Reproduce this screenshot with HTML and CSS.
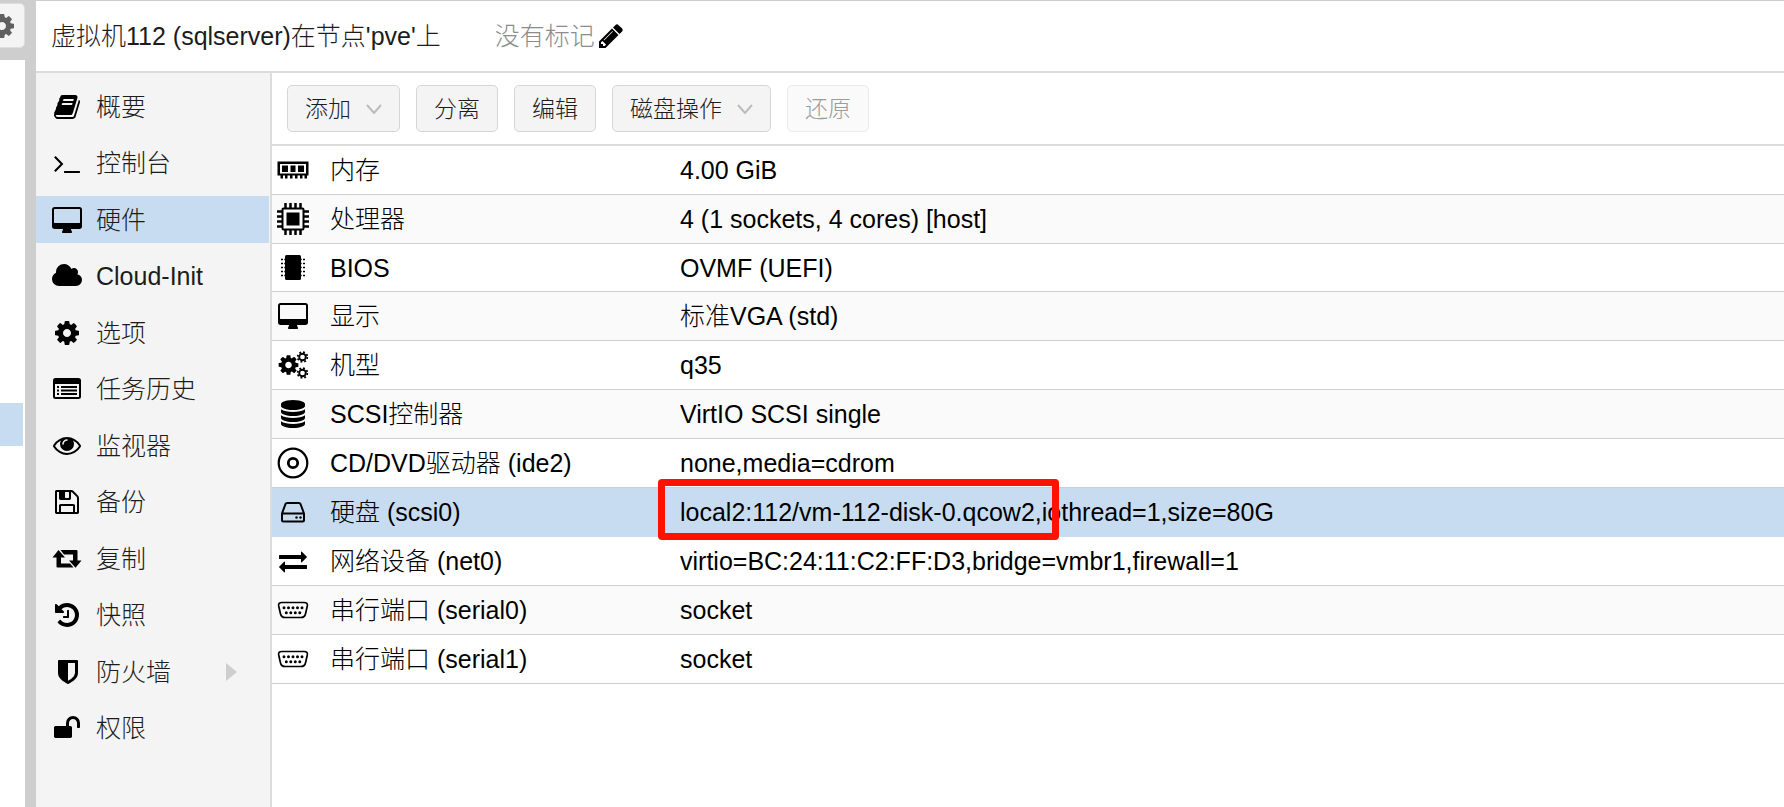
FILE: index.html
```html
<!DOCTYPE html>
<html lang="zh-CN">
<head>
<meta charset="utf-8">
<title>虚拟机112 (sqlserver)</title>
<link rel="stylesheet" href="styles.css">
</head>
<body>
<svg class="sprite" aria-hidden="true">
  <symbol id="cog" viewBox="0 0 1792 1792"><path d="M1152 896q0-106-75-181t-181-75-181 75-75 181 75 181 181 75 181-75 75-181zm512-109v222q0 12-8 23t-20 13l-185 28q-19 54-39 91 35 50 107 138 10 12 10 25t-9 23q-27 37-99 108t-94 71q-12 0-26-9l-138-108q-44 23-91 38-16 136-29 186-7 28-36 28h-222q-14 0-24.5-8.5t-11.5-21.5l-28-184q-49-16-90-37l-141 107q-10 9-25 9-14 0-25-11-126-114-165-168-7-10-7-23 0-12 8-23 15-21 51-66.5t54-70.5q-27-50-41-99l-183-27q-13-2-21-12.5t-8-23.5v-222q0-12 8-23t19-13l186-28q14-46 39-92-40-57-107-138-10-12-10-24 0-10 9-23 26-36 98.5-107.5t94.5-71.5q13 0 26 10l138 107q44-23 91-38 16-136 29-186 7-28 36-28h222q14 0 24.5 8.5t11.5 21.5l28 184q49 16 90 37l142-107q9-9 24-9 13 0 25 10 129 119 165 170 7 8 7 22 0 12-8 23-15 21-51 66.5t-54 70.5q26 50 41 98l183 28q13 2 21 12.5t8 23.5z"/></symbol>
  <symbol id="cog-small" viewBox="0 0 12 12"><g fill="none" stroke="currentColor"><circle cx="6" cy="6" r="3.300" stroke-width="1.900"/><circle cx="6" cy="6" r="4.900" stroke-width="1.800" stroke-dasharray="1.900 1.948"/></g></symbol>
  <symbol id="desktop" viewBox="0 -64 2048 1792"><path d="M1856 992v-832q0-13-9.5-22.5t-22.5-9.5h-1600q-13 0-22.5 9.5t-9.5 22.5v832q0 13 9.5 22.5t22.5 9.5h1600q13 0 22.5-9.5t9.5-22.5zm128-832v1088q0 66-47 113t-113 47h-544q0 37 16 77.5t32 71 16 43.5q0 26-19 45t-45 19h-512q-26 0-45-19t-19-45q0-14 16-44t32-70 16-78h-544q-66 0-113-47t-47-113v-1088q0-66 47-113t113-47h1600q66 0 113 47t47 113z"/></symbol>
  <symbol id="serial" viewBox="0 0 32 18">
    <path d="M5 1.5H27Q31 1.5 30.300 5L28.600 12.500Q27.800 16.500 24 16.500H8Q4.200 16.500 3.400 12.500L1.700 5Q1 1.500 5 1.500Z" fill="none" stroke="currentColor" stroke-width="1.700"/>
    <g fill="none" stroke="currentColor" stroke-width="3" stroke-linecap="round"><path d="M7 6.800H25.100" stroke-dasharray="0 4.500"/><path d="M9.300 11.800H23" stroke-dasharray="0 4.500"/></g>
  </symbol>
</svg>

<aside class="tree">
  <div class="tree-bar">
    <button class="tree-settings" type="button" aria-label="设置"><svg class="icon"><use href="#cog"/></svg></button>
  </div>
  <div class="tree-body"><div class="tree-selected"></div></div>
</aside>

<main class="main">
  <header class="header">
    <h1 class="title">虚拟机112 (sqlserver)在节点'pve'上</h1>
    <span class="tags">没有标记</span>
    <button class="edit-tags" type="button" aria-label="编辑标记"><svg class="icon" viewBox="0 0 1792 1792"><path d="M491 1536l91-91-235-235-91 91v107h128v128h107zm523-928q0-22-22-22-10 0-17 7l-542 542q-7 7-7 17 0 22 22 22 10 0 17-7l542-542q7-7 7-17zm-54-192l416 416-832 832h-416v-416zm683 96q0 53-37 90l-166 166-416-416 166-165q36-38 90-38 53 0 91 38l235 234q37 39 37 91z"/></svg></button>
  </header>

  <div class="content">
    <nav class="nav">
      <ul class="nav-list">
        <li><a class="nav-item" href="#"><svg class="icon" viewBox="0 0 1792 1792"><path d="M1703 478q40 57 18 129l-275 906q-19 64-76.5 107.5t-122.5 43.500h-923q-77 0-148.500-53.500t-99.500-131.500q-24-67-2-127 0-4 3-27t4-37q1-8-3-21.500t-3-19.500q2-11 8-21t16.500-23.500 16.500-23.500q23-38 45-91.500t30-91.500q3-10 .5-30t-.5-28q3-11 17-28t17-23q21-36 42-92t25-90q1-9-2.500-32t.5-28q4-13 22-30.500t22-22.500q19-26 42.500-84.500t27.500-96.500q1-8-3-25.500t-2-26.500q2-8 9-18t18-23 17-21q8-12 16.500-30.500t15-35 16-36 19.500-32 26.500-23.500 36-11.500 47.500 5.500l-1 3q38-9 51-9h761q74 0 114 56t18 130l-274 906q-36 119-71.500 153.500t-128.500 34.500h-869q-27 0-38 15-11 16-1 43 24 70 144 70h923q29 0 56-15.500t35-41.500l300-987q7-22 5-57 38 15 59 43zm-1064 2q-4 13 2 22.500t20 9.500h608q13 0 25.500-9.500t16.500-22.500l21-64q4-13-2-22.500t-20-9.500h-608q-13 0-25.500 9.500t-16.500 22.500zm-83 256q-4 13 2 22.500t20 9.500h608q13 0 25.500-9.500t16.500-22.500l21-64q4-13-2-22.500t-20-9.500h-608q-13 0-25.500 9.500t-16.500 22.500z"/></svg>概要</a></li>
        <li><a class="nav-item" href="#"><svg class="icon" viewBox="0 0 1792 1792"><path d="M649 983l-466 466q-10 10-23 10t-23-10l-50-50q-10-10-10-23t10-23l393-393-393-393q-10-10-10-23t10-23l50-50q10-10 23-10t23 10l466 466q10 10 10 23t-10 23zm1079 457v64q0 14-9 23t-23 9h-960q-14 0-23-9t-9-23v-64q0-14 9-23t23-9h960q14 0 23 9t9 23z"/></svg>控制台</a></li>
        <li><a class="nav-item nav-item-active" href="#" aria-current="page"><svg class="icon icon-wide"><use href="#desktop"/></svg>硬件</a></li>
        <li><a class="nav-item" href="#"><svg class="icon icon-wide" viewBox="0 0 2048 1792"><path d="M1984 1152q0 159-112.500 271.500t-271.500 112.500h-1088q-185 0-316.500-131.500t-131.500-316.500q0-132 71-241.500t187-163.500q-2-28-2-43 0-212 150-362t362-150q158 0 286.500 88t187.500 230q70-62 166-62 106 0 181 75t75 181q0 75-41 138 129 30 213 134.500t84 239.500z"/></svg>Cloud-Init</a></li>
        <li><a class="nav-item" href="#"><svg class="icon"><use href="#cog"/></svg>选项</a></li>
        <li><a class="nav-item" href="#"><svg class="icon" viewBox="0 0 1792 1792"><path fill-rule="evenodd" d="M160 192H1632Q1792 192 1792 352V1376Q1792 1536 1632 1536H160Q0 1536 0 1376V352Q0 192 160 192ZM128 576V1376Q128 1408 160 1408H1632Q1664 1408 1664 1376V576Z"/><path d="M256 704h128v128H256zM256 928h128v128H256zM256 1152h128v128H256zM512 704h1024v128H512zM512 928h1024v128H512zM512 1152h1024v128H512z"/></svg>任务历史</a></li>
        <li><a class="nav-item" href="#"><svg class="icon" viewBox="0 64 1792 1792"><path d="M1664 960q-152-236-381-353 61 104 61 225 0 185-131.500 316.500t-316.500 131.500-316.500-131.500-131.500-316.500q0-121 61-225-229 117-381 353 133 205 333.500 326.500t434.500 121.500 434.500-121.500 333.500-326.500zm-720-384q0-20-14-34t-34-14q-125 0-214.500 89.500t-89.500 214.500q0 20 14 34t34 14 34-14 14-34q0-86 61-147t147-61q20 0 34-14t14-34zm848 384q0 34-20 69-140 230-376.500 368.500t-499.500 138.500-499.500-139-376.500-368q-20-35-20-69t20-69q140-229 376.500-368t499.500-139 499.500 139 376.500 368q20 35 20 69z"/></svg>监视器</a></li>
        <li><a class="nav-item" href="#"><svg class="icon" viewBox="0 0 1792 1792"><path d="M512 1536h768v-384h-768v384zm896 0h128v-896q0-14-10-38.500t-20-34.500l-281-281q-10-10-34-20t-39-10v416q0 40-28 68t-68 28h-576q-40 0-68-28t-28-68v-416h-128v1280h128v-416q0-40 28-68t68-28h832q40 0 68 28t28 68v416zm-384-928v-320q0-13-9.500-22.500t-22.500-9.500h-192q-13 0-22.500 9.500t-9.500 22.500v320q0 13 9.500 22.500t22.500 9.500h192q13 0 22.500-9.500t9.500-22.500zm640 32v928q0 40-28 68t-68 28h-1344q-40 0-68-28t-28-68v-1344q0-40 28-68t68-28h928q40 0 88 20t76 48l280 280q28 28 48 76t20 88z"/></svg>备份</a></li>
        <li><a class="nav-item" href="#"><svg class="icon icon-wide" viewBox="0 0 32 28"><path d="M7.500 5L14 12.500H10V18.500H19L22.500 22.500H6.500Q5.500 22.500 5.500 21.500V12.500H1.500ZM9.500 5H25.500Q26.500 5 26.500 6V15.500H30.500L24.500 22.800L18 15.500H22V9.500H13Z"/></svg>复制</a></li>
        <li><a class="nav-item" href="#"><svg class="icon" viewBox="0 0 1792 1792"><path d="M1664 896q0 156-61 298t-164 245-245 164-298 61q-172 0-327-72.500t-264-204.500q-7-10-6.500-22.500t8.500-20.500l137-138q10-9 25-9 16 2 23 12 73 95 179 147t225 52q104 0 198.500-40.500t163.500-109.500 109.500-163.500 40.500-198.500-40.500-198.500-109.500-163.500-163.500-109.500-198.500-40.500q-98 0-188 35.500t-160 101.500l137 138q31 30 14 69-17 40-59 40h-448q-26 0-45-19t-19-45v-448q0-42 40-59 39-17 69 14l130 129q107-101 244.500-156.500t284.500-55.500q156 0 298 61t245 164 164 245 61 298zm-640-288v448q0 14-9 23t-23 9h-320q-14 0-23-9t-9-23v-64q0-14 9-23t23-9h224v-352q0-14 9-23t23-9h64q14 0 23 9t9 23z"/></svg>快照</a></li>
        <li><a class="nav-item" href="#"><svg class="icon" viewBox="0 0 1792 1792"><path d="M1408 960v-640h-448v1137q119-63 213-137 235-184 235-360zm192-768v768q0 86-33.500 170.500t-83 150-118 127.500-126.500 103-121 77.500-89.500 49.500-42.500 20q-12 6-26 6t-26-6q-16-7-42.500-20t-89.500-49.500-121-77.500-126.500-103-118-127.500-83-150-33.500-170.500v-768q0-26 19-45t45-19h1152q26 0 45 19t19 45z"/></svg>防火墙<svg class="expander" viewBox="0 0 11 18"><path d="M0 0L11 9L0 18Z"/></svg></a></li>
        <li><a class="nav-item" href="#"><svg class="icon" viewBox="0 0 1792 1792"><path d="M1728 576v256q0 26-19 45t-45 19h-64q-26 0-45-19t-19-45v-256q0-106-75-181t-181-75-181 75-75 181v192h96q40 0 68 28t28 68v576q0 40-28 68t-68 28h-960q-40 0-68-28t-28-68v-576q0-40 28-68t68-28h672v-192q0-185 131.500-316.500t316.500-131.500 316.500 131.500 131.500 316.500z"/></svg>权限</a></li>
      </ul>
    </nav>

    <section class="panel">
      <div class="toolbar">
        <button class="btn" type="button">添加<svg class="chevron" viewBox="0 0 16 10"><path d="M1 1L8 9L15 1"/></svg></button>
        <button class="btn" type="button">分离</button>
        <button class="btn" type="button">编辑</button>
        <button class="btn" type="button">磁盘操作<svg class="chevron" viewBox="0 0 16 10"><path d="M1 1L8 9L15 1"/></svg></button>
        <button class="btn" type="button" disabled>还原</button>
      </div>

      <table class="hardware">
        <tbody>
          <tr>
            <td class="cell-icon"><svg class="icon icon-wide" viewBox="0 0 32 28"><path fill-rule="evenodd" d="M0.500 5.500H31.500V19.500H30V22.500H27.500V19.500H25.500V22.500H23V19.500H20.500V22.500H18V19.500H15.500V22.500H13V19.500H10.500V22.500H8V19.500H6V22.500H3.500V19.500H0.500ZM3 8V17.500H29V8Z"/><path d="M5 9.500H11V16H5ZM13.500 9.500H18.500V16H13.500ZM21 9.500H27V16H21Z"/></svg></td>
            <th scope="row">内存</th><td>4.00 GiB</td>
          </tr>
          <tr>
            <td class="cell-icon"><svg class="icon icon-square" viewBox="0 0 32 32"><path fill="none" stroke="currentColor" stroke-width="2.500" d="M8.500 0V5M13.500 0V5M18.500 0V5M23.500 0V5M8.500 27V32M13.500 27V32M18.500 27V32M23.500 27V32M0 8.500H5M0 13.500H5M0 18.500H5M0 23.500H5M27 8.500H32M27 13.500H32M27 18.500H32M27 23.500H32"/><rect x="5.500" y="5.500" width="21" height="21" rx="1" fill="none" stroke="currentColor" stroke-width="2"/><path d="M9.500 9.500H22.500V22.500H9.500Z"/></svg></td>
            <th scope="row">处理器</th><td>4 (1 sockets, 4 cores) [host]</td>
          </tr>
          <tr>
            <td class="cell-icon"><svg class="icon" viewBox="0 0 28 28"><rect x="6" y="1" width="16" height="25" rx="1.500"/><path fill="none" stroke="currentColor" stroke-width="1.600" stroke-dasharray="2 1.300" d="M2 5.500H6M2 9.500H6M2 13.500H6M2 17.500H6M2 21.500H6M26 5.500H22M26 9.500H22M26 13.500H22M26 17.500H22M26 21.500H22"/></svg></td>
            <th scope="row">BIOS</th><td>OVMF (UEFI)</td>
          </tr>
          <tr>
            <td class="cell-icon"><svg class="icon icon-wide"><use href="#desktop"/></svg></td>
            <th scope="row">显示</th><td>标准VGA (std)</td>
          </tr>
          <tr>
            <td class="cell-icon"><svg class="icon icon-wide" viewBox="0 0 32 28"><use href="#cog" x="0" y="2.500" width="23" height="23"/><use href="#cog-small" x="19.500" y="0" width="12" height="12"/><use href="#cog-small" x="19.500" y="16" width="12" height="12"/></svg></td>
            <th scope="row">机型</th><td>q35</td>
          </tr>
          <tr>
            <td class="cell-icon"><svg class="icon" viewBox="0 0 1792 1792"><path d="M896 768q237 0 443-43t325-127v170q0 69-103 128t-280 93.500-385 34.500-385-34.500-280-93.500-103-128v-170q119 84 325 127t443 43zm0 768q237 0 443-43t325-127v170q0 69-103 128t-280 93.500-385 34.500-385-34.500-280-93.500-103-128v-170q119 84 325 127t443 43zm0-384q237 0 443-43t325-127v170q0 69-103 128t-280 93.500-385 34.500-385-34.500-280-93.500-103-128v-170q119 84 325 127t443 43zm0-1152q208 0 385 34.500t280 93.500 103 128v128q0 69-103 128t-280 93.500-385 34.500-385-34.500-280-93.500-103-128v-128q0-69 103-128t280-93.500 385-34.500z"/></svg></td>
            <th scope="row">SCSI控制器</th><td>VirtIO SCSI single</td>
          </tr>
          <tr>
            <td class="cell-icon"><svg class="icon icon-square" viewBox="0 0 32 32"><g fill="none" stroke="currentColor"><circle cx="16" cy="16" r="14.300" stroke-width="2.200"/><circle cx="16" cy="16" r="4.700" stroke-width="2.800"/></g></svg></td>
            <th scope="row">CD/DVD驱动器 (ide2)</th><td>none,media=cdrom</td>
          </tr>
          <tr class="row-selected">
            <td class="cell-icon"><svg class="icon" viewBox="0 0 28 28"><path fill="none" stroke="currentColor" stroke-width="2" stroke-linejoin="round" d="M3 15.500L6.500 6Q7 5 8 5H20Q21 5 21.500 6L25 15.500V22Q25 23.500 23.500 23.500H4.500Q3 23.500 3 22ZM3 15.500H25"/><circle cx="17.500" cy="19.500" r="1.200"/><circle cx="21.500" cy="19.500" r="1.200"/></svg></td>
            <th scope="row">硬盘 (scsi0)</th><td><div class="value">local2:112/vm-112-disk-0.qcow2,iothread=1,size=80G<span class="highlight"></span></div></td>
          </tr>
          <tr>
            <td class="cell-icon"><svg class="icon" viewBox="0 0 1792 1792"><path d="M1792 1184v192q0 13-9.500 22.500t-22.500 9.500h-1376v192q0 13-9.500 22.500t-22.500 9.500q-12 0-24-10l-319-320q-9-9-9-22 0-14 9-23l320-320q9-9 23-9 13 0 22.500 9.500t9.500 22.500v192h1376q13 0 22.500 9.500t9.500 22.500zm0-544q0 14-9 23l-320 320q-9 9-23 9-13 0-22.500-9.500t-9.500-22.500v-192h-1376q-13 0-22.500-9.500t-9.500-22.500v-192q0-13 9.500-22.500t22.500-9.500h1376v-192q0-14 9-23t23-9q12 0 24 10l319 319q9 9 9 23z"/></svg></td>
            <th scope="row">网络设备 (net0)</th><td>virtio=BC:24:11:C2:FF:D3,bridge=vmbr1,firewall=1</td>
          </tr>
          <tr>
            <td class="cell-icon"><svg class="icon icon-wide"><use href="#serial"/></svg></td>
            <th scope="row">串行端口 (serial0)</th><td>socket</td>
          </tr>
          <tr>
            <td class="cell-icon"><svg class="icon icon-wide"><use href="#serial"/></svg></td>
            <th scope="row">串行端口 (serial1)</th><td>socket</td>
          </tr>
        </tbody>
      </table>
    </section>
  </div>
</main>
</body>
</html>
```
FILE: styles.css
```css
* { box-sizing: border-box; }

body {
  margin: 0;
  height: 100vh;
  display: flex;
  overflow: hidden;
  background: #cecece;
  color: #1c1c1c;
  font: 300 25px/30px "Liberation Sans", "Noto Sans CJK SC", sans-serif;
}

button {
  font: inherit;
  color: inherit;
}

.sprite {
  position: absolute;
  width: 0;
  height: 0;
}

.icon {
  display: block;
  flex: none;
  width: 28px;
  height: 28px;
  fill: currentColor;
  color: #000;
}
.icon-wide { width: 32px; }
.icon-square { width: 32px; height: 32px; }

/* Resource tree, mostly scrolled out of view */
.tree {
  width: 25px;
  margin-right: 11px;
  display: flex;
  flex-direction: column;
}
.tree-bar {
  height: 60px;
  padding-top: 3px;
  display: flex;
  justify-content: flex-end;
}
.tree-settings {
  flex: none;
  width: 47px;
  height: 45px;
  padding: 0 9px;
  border: 1px solid #dedede;
  border-radius: 5px;
  background: #f4f4f4;
}
.tree-settings .icon { color: #606060; }
.tree-body {
  flex: 1;
  padding: 343px 2px 0 0;
  background: #fff;
}
.tree-selected {
  height: 43px;
  background: #c7dcf0;
}

.main {
  flex: 1;
  min-width: 0;
  display: flex;
  flex-direction: column;
  border-top: 1px solid #cecece;
  background: #fff;
}

.header {
  display: flex;
  align-items: center;
  height: 72px;
  padding-left: 15px;
  border-bottom: 2px solid #dcdcdc;
}
.title {
  margin: 0 54px 0 0;
  font-size: 25px;
  font-weight: 300;
}
.tags { color: #8c8c8c; }
.edit-tags {
  padding: 0 0 0 2px;
  border: 0;
  background: none;
}

.content {
  flex: 1;
  min-height: 0;
  display: flex;
}

.nav {
  width: 236px;
  padding-top: 10px;
  border-right: 2px solid #dcdcdc;
  background: #f4f4f4;
}
.nav-list {
  display: flex;
  flex-direction: column;
  justify-content: space-between;
  height: 669px;
  margin: 0;
  padding: 0;
  list-style: none;
}
.nav-item {
  display: grid;
  grid-template-columns: 32px 1fr 11px;
  column-gap: 13px;
  align-items: center;
  height: 47px;
  margin-right: 1px;
  padding: 0 32px 0 15px;
  color: inherit;
  text-decoration: none;
}
.nav-item .icon { justify-self: center; }
.nav-item-active { background: #c7dcf0; }
.expander { width: 11px; height: 18px; fill: #cecece; }

.panel {
  flex: 1;
  min-width: 0;
}

.toolbar {
  display: flex;
  align-items: center;
  gap: 16px;
  height: 73px;
  padding-left: 15px;
  border-bottom: 2px solid #dcdcdc;
}
.btn {
  display: flex;
  align-items: center;
  gap: 15px;
  height: 47px;
  padding: 0 17px;
  border: 1px solid #d6d6d6;
  border-radius: 5px;
  background: #f4f4f4;
  font-size: 23px;
}
.btn:disabled {
  border-color: #ebebeb;
  background: #fafafa;
  color: #9c9c9c;
}
.chevron {
  width: 16px;
  height: 10px;
  fill: none;
  stroke: #bcbcbc;
  stroke-width: 2;
}

.hardware {
  width: 100%;
  height: 538px;
  table-layout: fixed;
  border-collapse: collapse;
  color: #000;
}
.hardware td,
.hardware th {
  padding: 0;
  border-bottom: 1px solid #cfcfcf;
  font-weight: 300;
  text-align: left;
  white-space: nowrap;
}
.hardware th { width: 350px; }
.hardware tr:nth-child(even) { background: #fafafa; }
.hardware .cell-icon { width: 58px; }
.cell-icon .icon {
  width: 32px;
  margin-left: 5px;
}
.cell-icon .icon-square { margin: -2px 0 -2px 5px; }
.hardware tr.row-selected:nth-child(n) { background: #c7dcf0; }
.hardware .row-selected td,
.hardware .row-selected th { border-color: #c7dcf0; }

.value { position: relative; }
.highlight {
  position: absolute;
  top: -18px;
  left: -22px;
  width: 401px;
  height: 61px;
  border: 7px solid #ff1200;
  border-radius: 4px;
}
```
